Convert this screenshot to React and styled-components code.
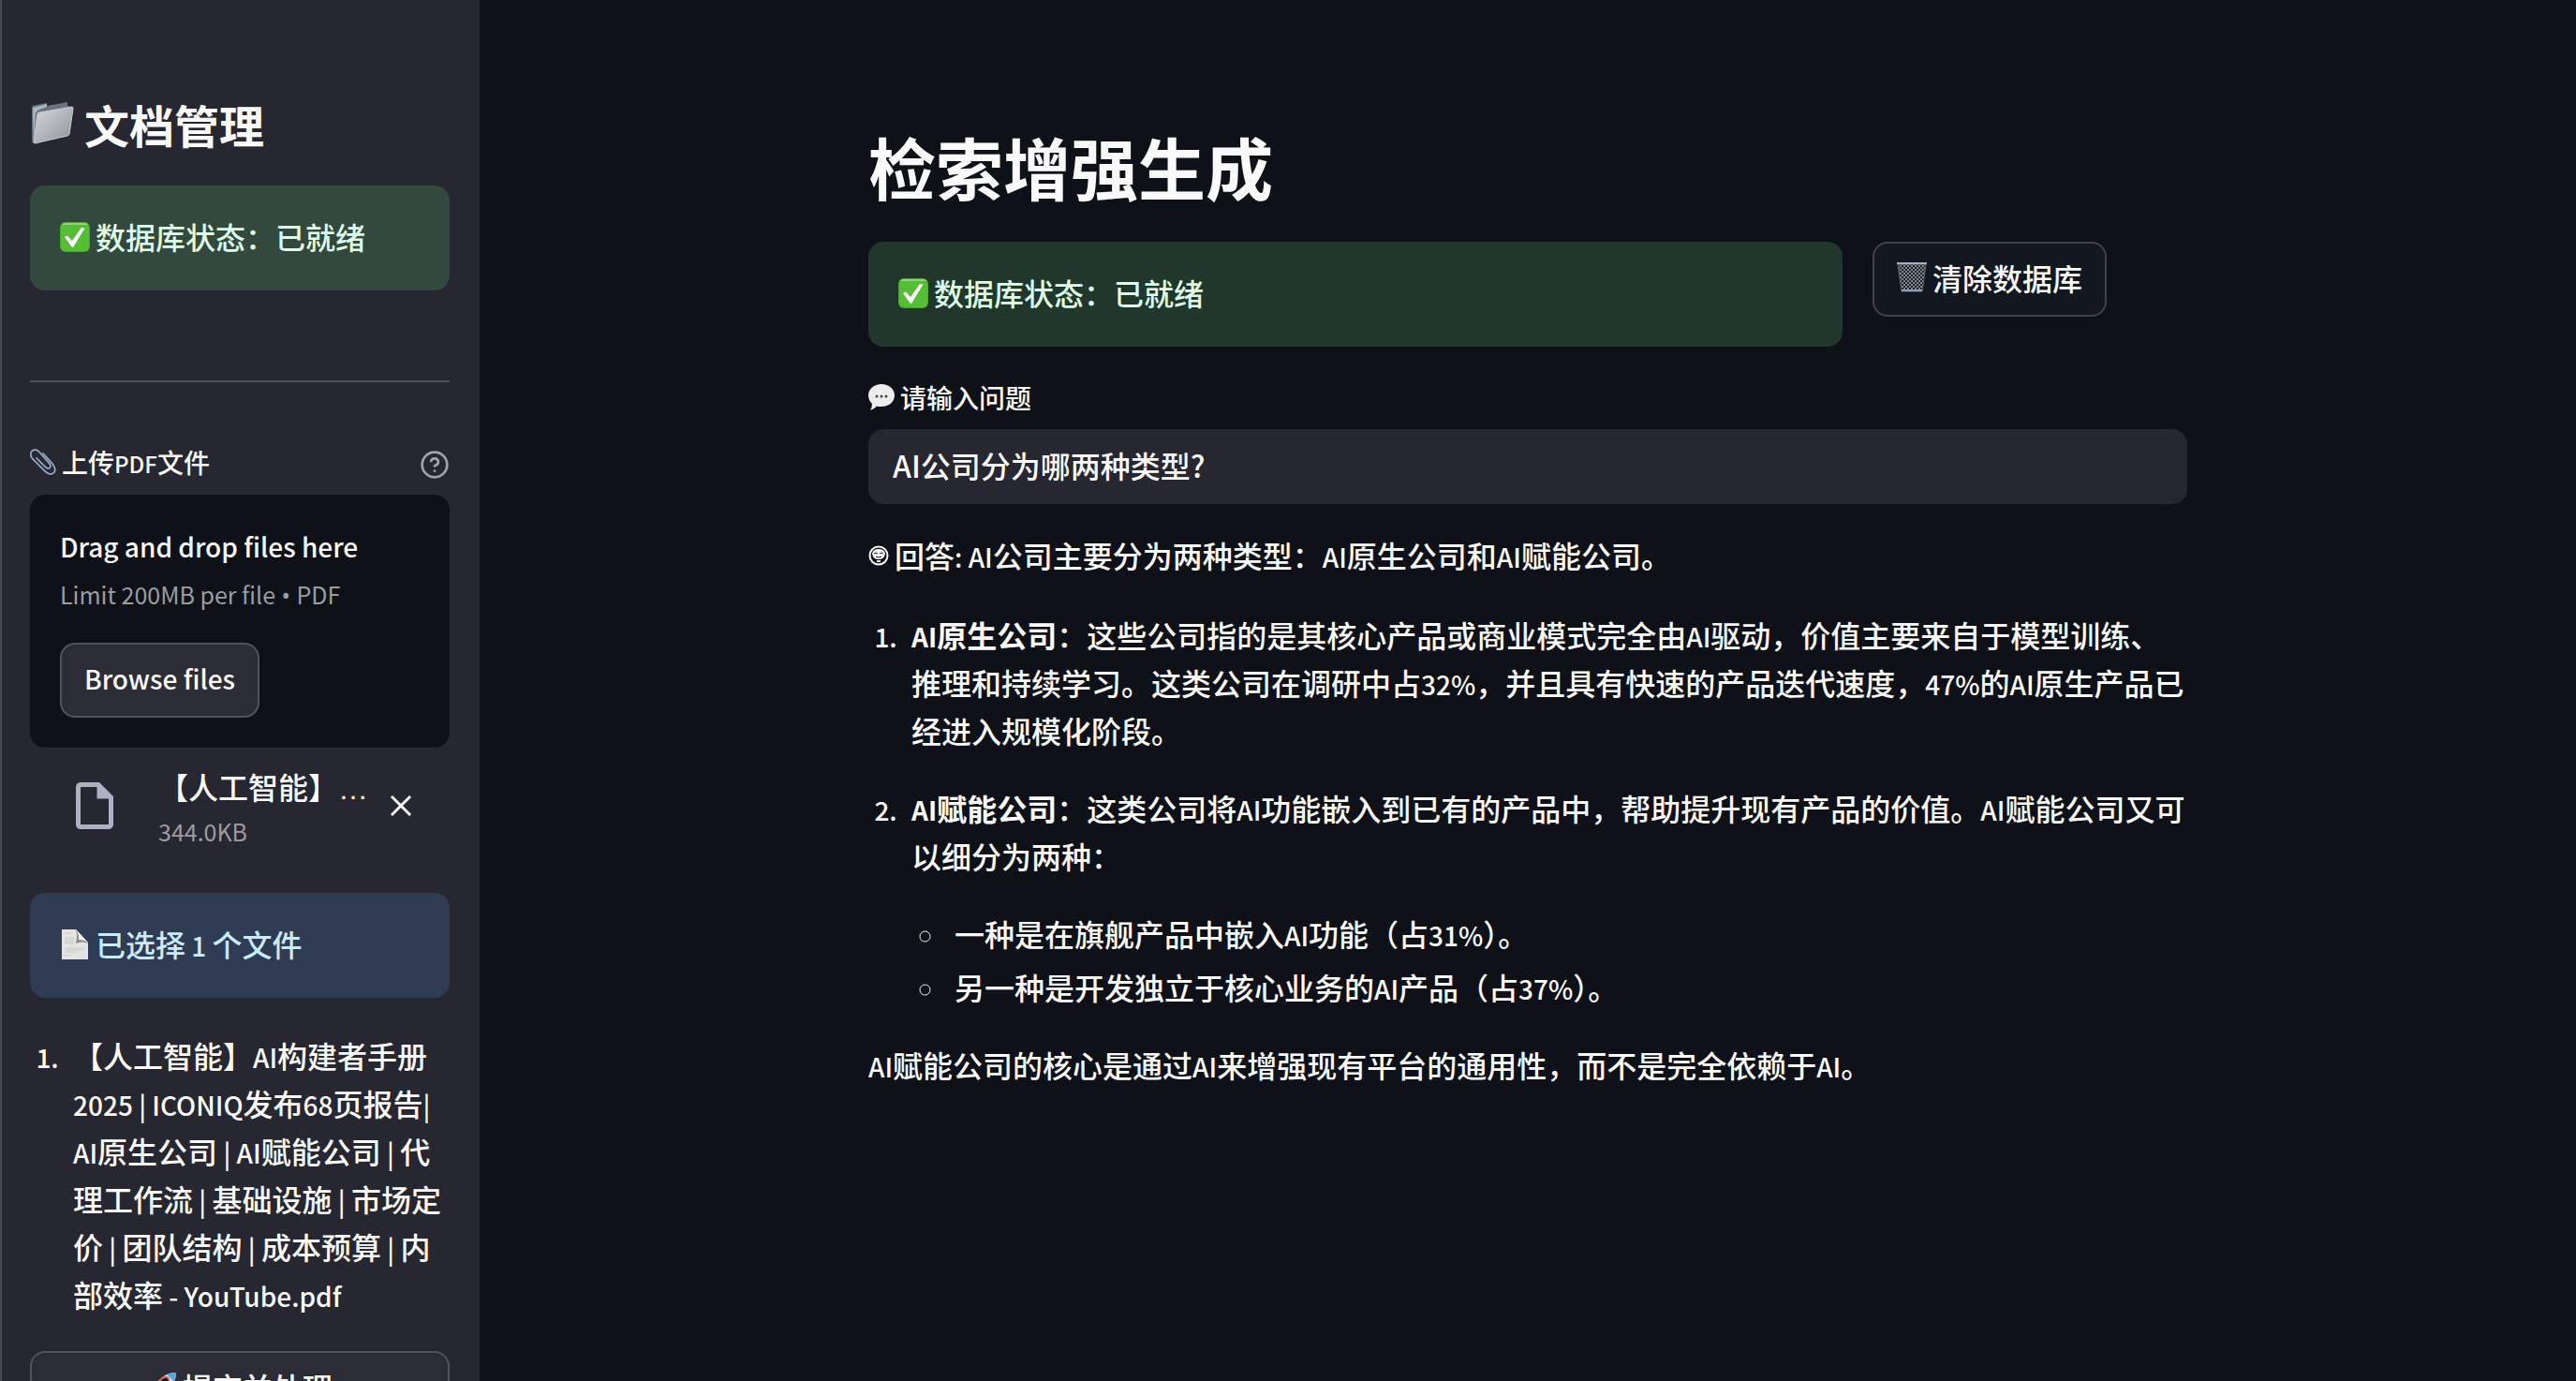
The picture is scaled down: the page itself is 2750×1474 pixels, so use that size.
import React, { useState } from 'react';
import styled, { createGlobalStyle, css } from 'styled-components';

const GlobalStyle = createGlobalStyle`
  *, *::before, *::after { box-sizing: border-box; }
  html, body { height: 100%; margin: 0; }
  body { background: #0e1117; overflow: hidden; }
  #root { height: 100%; }
  body, button, input {
    font-family: "Noto Sans CJK SC", "Noto Sans", sans-serif;
    font-weight: 500;
    color: #fafafa;
  }
  p, h1, h2, ol, ul { margin: 0; padding: 0; }
`;

const Page = styled.div`
  display: flex;
  height: 100vh;
  font-size: 32px;
  line-height: 51px;
`;

const Sidebar = styled.aside`
  flex: 0 0 512px;
  height: 100%;
  overflow: hidden;
  padding: 103px 32px 0 30px;
  border-left: 2px solid #48494f;
  background: #262730;
`;

const Main = styled.main`
  flex: 1;
  min-width: 0;
  overflow: hidden;
`;

const Content = styled.div`
  max-width: 1472px;
  margin: 0 auto;
  padding: 134px 32px 0;
`;

const Latin = styled.span`
  font-size: ${(p) => (p.$small ? 24 : 28)}px;
  line-height: 1;
`;

const Dot = styled.span`
  font-family: "Noto Sans", sans-serif;
  line-height: 1;
`;

const Glyph = styled.svg`
  flex: none;
  display: block;
  width: ${(p) => p.$size}px;
  height: ${(p) => p.$size}px;
`;

const IconText = styled.span`
  display: flex;
  align-items: center;
  gap: ${(p) => p.$gap || 6}px;
`;

const SideTitle = styled.h2`
  font-size: 48px;
  line-height: 58px;
  font-weight: 700;
`;

const PageTitle = styled.h1`
  font-size: 72px;
  line-height: 86px;
  font-weight: 700;
`;

const alertTones = {
  success: css`background: #33493d; color: #dffde9;`,
  successMain: css`background: #22372b; color: #dffde9;`,
  info: css`background: #2f3c53; color: #c7ebff;`,
};

const Alert = styled.div`
  ${(p) => alertTones[p.$tone]}
  padding: 29px 32px 32px;
  border-radius: 16px;
`;

const SideAlert = styled(Alert)`
  margin-top: ${(p) => p.$top}px;
`;

const Divider = styled.hr`
  height: 2px;
  margin: 96px 0 60px;
  border: 0;
  background: #4d4e57;
`;

const LabelRow = styled.div`
  display: flex;
  align-items: flex-end;
  justify-content: space-between;
  height: 50px;
  margin-bottom: 10px;
`;

const FieldLabel = styled.label`
  font-size: 28px;
  line-height: 50px;
`;

const BareButton = styled.button`
  display: flex;
  align-items: center;
  justify-content: center;
  padding: 8px;
  border: 0;
  background: none;
  cursor: pointer;
`;

const HelpButton = styled(BareButton)`
  padding: 8px 0 6px;
`;

const CloseButton = styled(BareButton)`
  margin-left: 12px;
`;

const Dropzone = styled.section`
  display: flex;
  flex-direction: column;
  align-items: flex-start;
  padding: 30px 32px 32px;
  border-radius: 16px;
  background: #0e1117;
`;

const DropTitle = styled.p`
  font-size: 28px;
  line-height: 51px;
`;

const Muted = styled.p`
  font-size: 25px;
  font-weight: 400;
  line-height: ${(p) => p.$line || 38}px;
  color: #9c9da0;
`;

const Button = styled.button`
  display: flex;
  align-items: center;
  justify-content: center;
  height: 80px;
  width: ${(p) => (p.$wide ? '100%' : 'auto')};
  margin-top: ${(p) => p.$top || 0}px;
  padding: 0 24px 4px;
  border: 2px solid ${(p) => (p.$raised ? '#52535c' : '#414349')};
  border-radius: 16px;
  background: ${(p) => (p.$raised ? '#2b2c36' : '#131720')};
  font-size: 32px;
  line-height: 48px;
  white-space: nowrap;
  cursor: pointer;
`;

const FileRow = styled.div`
  display: flex;
  align-items: center;
  margin-top: 15px;
  padding: 0 32px;
`;

const FileIcon = styled.div`
  display: flex;
  flex: none;
  padding: 0 38px 0 7px;
`;

const FileInfo = styled.div`
  flex: 1;
  min-width: 0;
`;

/* The first family supplies a baseline ellipsis for the truncated name. */
const FileName = styled.div`
  overflow: hidden;
  padding-top: 4px;
  font-family: "Liberation Sans", "Noto Sans CJK SC", sans-serif;
  text-overflow: ellipsis;
  white-space: nowrap;
`;

const NumberedList = styled.ol`
  display: flex;
  flex-direction: column;
  gap: ${(p) => p.$gap || 0}px;
  margin-top: ${(p) => p.$top}px;
`;

const BulletList = styled.ul`
  display: flex;
  flex-direction: column;
  gap: 6px;
  margin-top: 32px;
  list-style: circle;
`;

const Item = styled.li`
  margin-left: 37px;
  padding-left: 9px;
  &::marker { font-size: 28px; }
`;

const StatusRow = styled.div`
  display: grid;
  grid-template-columns: calc(75% - 16px) auto;
  gap: 32px;
  align-items: start;
  justify-content: start;
  margin-top: 38px;
`;

const Field = styled.div`
  display: flex;
  flex-direction: column;
  margin-top: 29px;
`;

const TextInput = styled.input`
  height: 80px;
  margin-top: 9px;
  padding: 0 24px 4px;
  border: 2px solid #262730;
  border-radius: 16px;
  outline: 0;
  background: #262730;
  font-size: 32px;
`;

const Answer = styled.section`
  margin-top: 29px;
`;

const Closing = styled.p`
  margin-top: 32px;
`;

/* Latin runs are set a step smaller so that they sit evenly beside Han text. */
function Mixed({ children, small }) {
  return children.split(/([A-Za-z0-9%|.:?\- ]+)/).map((part, i) =>
    i % 2 ? <Latin key={i} $small={small}>{part}</Latin> : part
  );
}

function FolderGlyph() {
  return (
    <Glyph $size={48} viewBox="0 0 48 48" aria-hidden="true">
      <defs>
        <linearGradient id="folderFront" x1="0" y1="0" x2="1" y2="1">
          <stop offset="0" stopColor="#d5d9df" />
          <stop offset="1" stopColor="#8f9396" />
        </linearGradient>
      </defs>
      <path d="M2 7 Q2 5 4 4.600L18 2V5L40 1V5L44 6L40 36L4 45Q2 44 2 41Z" fill="#66727f" />
      <path d="M3 7L18 3V6L10 9Q6 11 6 14L4 43Z" fill="#a9b3bd" />
      <path d="M10 12L45 6Q46 6 46 8L42 35Q42 36 40 37L5 45Q4 45 4 43L8 14Q8 12 10 12Z" fill="url(#folderFront)" stroke="#c6cacf" strokeWidth="1" />
    </Glyph>
  );
}

function CheckGlyph() {
  return (
    <Glyph $size={32} viewBox="0 0 32 32" aria-hidden="true">
      <rect width="32" height="32" rx="6" fill="#4aa52c" />
      <rect x="1" y="1" width="30" height="30" rx="5" fill="#56bd36" />
      <path d="M5 1H27Q29 1 30 3H2Q3 1 5 1Z" fill="#8ed66f" />
      <path d="M5 16L8 14.500L13 20L23 6L26.500 6.500L14 27H13Z" fill="#fff" />
    </Glyph>
  );
}

function PaperclipGlyph() {
  const wire = 'M14 5L24 16Q29 23 25 26Q21 29 15 23L3 11Q-1 6 2 2.500Q6 -1 10.500 4L21 16Q23 19 21 20.500Q19 22 16 19L7 10';
  return (
    <Glyph $size={28} viewBox="0 0 28 28" fill="none" strokeLinecap="round" aria-hidden="true">
      <path d={wire} stroke="#6f7d96" strokeWidth="2" />
      <path d={wire} stroke="#aebbd0" strokeWidth="1" />
    </Glyph>
  );
}

function HelpGlyph() {
  return (
    <Glyph $size={32} viewBox="0 0 24 24" fill="none" stroke="#a3a4a9" strokeWidth="2" strokeLinecap="round" strokeLinejoin="round" aria-hidden="true">
      <circle cx="12" cy="12" r="10" />
      <path d="M9.090 9a3 3 0 0 1 5.830 1c0 2-3 3-3 3" />
      <path d="M12 17h.01" />
    </Glyph>
  );
}

function FileGlyph() {
  return (
    <Glyph $size={60} viewBox="0 0 24 24" aria-hidden="true">
      <path d="M6 2c-1.100 0-1.990.9-1.990 2L4 20c0 1.100.890 2 1.990 2H18c1.100 0 2-.9 2-2V8l-6-6H6zm0 18V4h7v5h5v11H6z" fill="#aeb0c4" />
    </Glyph>
  );
}

function CloseGlyph() {
  return (
    <Glyph $size={24} viewBox="0 0 24 24" aria-hidden="true">
      <path d="M2 2L22 22M22 2L2 22" stroke="#fafafa" strokeWidth="3" />
    </Glyph>
  );
}

function PageGlyph() {
  return (
    <Glyph $size={32} viewBox="0 0 32 32" aria-hidden="true">
      <path d="M2 0H17L30 14V32H2Z" fill="#e4e4e4" />
      <path d="M5 4H12M5 9H15M5 11H15M5 13H15M5 15H15M5 20H26M5 22H26M5 24H18M5 28H13" stroke="#cbcbcb" strokeWidth="1" />
      <path d="M17 0Q19 7 17 15Q24 12 30 15Z" fill="#8f8f8f" />
      <path d="M17 0Q21 6 20 11Q26 11 30 14Z" fill="#f4f4f4" />
    </Glyph>
  );
}

function RocketGlyph() {
  return (
    <Glyph $size={32} viewBox="0 0 32 32" aria-hidden="true">
      <path d="M10 14L3 17L1 23L9 20ZM18 22L15 29L9 31L12 23Z" fill="#c73a34" />
      <path d="M31 1Q19 1 11 11L7 20L12 25L21 21Q31 13 31 1Z" fill="#dfe4ea" />
      <path d="M31 1Q25 1 21 3L29 11Q31 6 31 1Z" fill="#5da4dc" />
      <ellipse cx="18" cy="11" rx="6" ry="4" transform="rotate(-40 18 11)" fill="#14171c" stroke="#d0584f" strokeWidth="2" />
      <path d="M8 20L2 30L12 24Z" fill="#f2a33a" />
    </Glyph>
  );
}

function TrashGlyph() {
  return (
    <Glyph $size={32} viewBox="0 0 32 32" fill="none" aria-hidden="true">
      <defs>
        <pattern id="mesh" width="4" height="4" patternUnits="userSpaceOnUse">
          <path d="M0 0L4 4M4 0L0 4" stroke="#7d858e" strokeWidth="1" />
        </pattern>
      </defs>
      <path d="M1 2H31L27 31H5Z" fill="#20252d" />
      <path d="M1 2H31L27 31H5Z" fill="url(#mesh)" stroke="#626a74" strokeWidth="1" />
      <path d="M0 1H32" stroke="#9fb0c8" strokeWidth="2" />
      <path d="M5 30H27" stroke="#8ea2bf" strokeWidth="2" />
    </Glyph>
  );
}

function SpeechGlyph() {
  return (
    <Glyph $size={28} viewBox="0 0 28 28" aria-hidden="true">
      <path d="M14 0C22 0 28 5 28 12S22 24 14 24Q11 24 9 23.500Q6 27 2 28Q4 25 4 21Q0 17 0 12C0 5 6 0 14 0Z" fill="#ededed" />
      <circle cx="9" cy="13" r="1.500" fill="#444" />
      <circle cx="14" cy="13" r="1.500" fill="#444" />
      <circle cx="19" cy="13" r="1.500" fill="#444" />
    </Glyph>
  );
}

function FaceGlyph() {
  return (
    <Glyph $size={22} viewBox="0 0 22 22" fill="none" aria-hidden="true">
      <circle cx="11" cy="11" r="9.500" stroke="#fafafa" strokeWidth="2" />
      <path d="M4 9Q5 4 11 4T18 9Q17 15 11 15T4 9Z" fill="#fafafa" />
      <path d="M6 9Q8 7 10 9M12 9Q14 7 16 9M8 12Q11 14 14 12" stroke="#0e1117" strokeWidth="1" />
      <path d="M9 17H13" stroke="#fafafa" strokeWidth="2" />
    </Glyph>
  );
}

export default function App() {
  const [question, setQuestion] = useState('AI公司分为哪两种类型?');
  return (
    <>
      <GlobalStyle />
      <Page>
        <Sidebar>
          <SideTitle>
            <IconText $gap={10}><FolderGlyph />文档管理</IconText>
          </SideTitle>
          <SideAlert $tone="success" $top={37}>
            <IconText><CheckGlyph />数据库状态：已就绪</IconText>
          </SideAlert>
          <Divider />
          <LabelRow>
            <FieldLabel htmlFor="browse">
              <IconText><PaperclipGlyph /><span><Mixed small>上传PDF文件</Mixed></span></IconText>
            </FieldLabel>
            <HelpButton type="button" aria-label="帮助"><HelpGlyph /></HelpButton>
          </LabelRow>
          <Dropzone>
            <DropTitle>Drag and drop files here</DropTitle>
            <Muted $line={51}>Limit 200MB per file<Dot> • </Dot>PDF</Muted>
            <Button id="browse" type="button" $raised $top={26}><Latin>Browse files</Latin></Button>
          </Dropzone>
          <FileRow>
            <FileIcon><FileGlyph /></FileIcon>
            <FileInfo>
              <FileName>【人工智能】AI构建者手册2025</FileName>
              <Muted>344.0KB</Muted>
            </FileInfo>
            <CloseButton type="button" aria-label="移除文件"><CloseGlyph /></CloseButton>
          </FileRow>
          <SideAlert $tone="info" $top={47}>
            <IconText><PageGlyph /><span><Mixed>已选择 1 个文件</Mixed></span></IconText>
          </SideAlert>
          <NumberedList $top={36}>
            <Item>
              <Mixed>【人工智能】AI构建者手册2025 | ICONIQ发布68页报告| AI原生公司 | AI赋能公司 | 代理工作流 | 基础设施 | 市场定价 | 团队结构 | 成本预算 | 内部效率 - YouTube.pdf</Mixed>
            </Item>
          </NumberedList>
          <Button type="button" $raised $wide $top={35}>
            <IconText><RocketGlyph />提交并处理</IconText>
          </Button>
        </Sidebar>
        <Main>
          <Content>
            <PageTitle>检索增强生成</PageTitle>
            <StatusRow>
              <Alert $tone="successMain">
                <IconText><CheckGlyph />数据库状态：已就绪</IconText>
              </Alert>
              <Button type="button">
                <IconText><TrashGlyph />清除数据库</IconText>
              </Button>
            </StatusRow>
            <Field>
              <FieldLabel htmlFor="question">
                <IconText><SpeechGlyph />请输入问题</IconText>
              </FieldLabel>
              <TextInput id="question" value={question} onChange={(e) => setQuestion(e.target.value)} />
            </Field>
            <Answer>
              <IconText><FaceGlyph /><span><Mixed>回答: AI公司主要分为两种类型：AI原生公司和AI赋能公司。</Mixed></span></IconText>
              <NumberedList $gap={32} $top={34}>
                <Item>
                  <strong><Mixed>AI原生公司</Mixed></strong>
                  <Mixed>：这些公司指的是其核心产品或商业模式完全由AI驱动，价值主要来自于模型训练、推理和持续学习。这类公司在调研中占32%，并且具有快速的产品迭代速度，47%的AI原生产品已经进入规模化阶段。</Mixed>
                </Item>
                <Item>
                  <strong><Mixed>AI赋能公司</Mixed></strong>
                  <Mixed>：这类公司将AI功能嵌入到已有的产品中，帮助提升现有产品的价值。AI赋能公司又可以细分为两种：</Mixed>
                  <BulletList>
                    <Item><Mixed>一种是在旗舰产品中嵌入AI功能（占31%）。</Mixed></Item>
                    <Item><Mixed>另一种是开发独立于核心业务的AI产品（占37%）。</Mixed></Item>
                  </BulletList>
                </Item>
              </NumberedList>
              <Closing><Mixed>AI赋能公司的核心是通过AI来增强现有平台的通用性，而不是完全依赖于AI。</Mixed></Closing>
            </Answer>
          </Content>
        </Main>
      </Page>
    </>
  );
}
